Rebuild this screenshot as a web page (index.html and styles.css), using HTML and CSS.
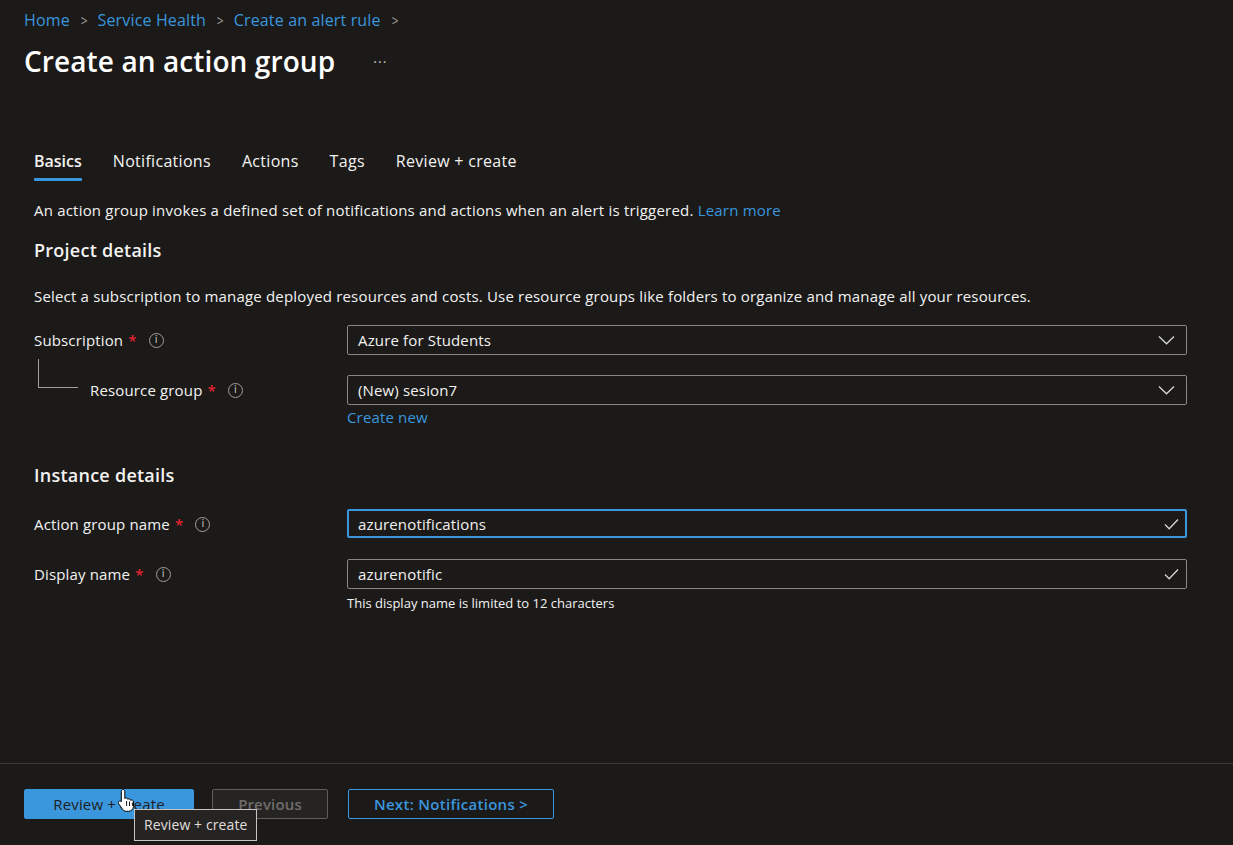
FILE: index.html
```html
<!DOCTYPE html>
<html lang="en">
<head>
<meta charset="utf-8">
<title>Create an action group</title>
<link rel="stylesheet" href="styles.css">
</head>
<body>
<div class="page">
  <header class="header">
    <nav class="crumbs">
      <a class="crumb">Home</a><span class="sep">&gt;</span>
      <a class="crumb">Service Health</a><span class="sep">&gt;</span>
      <a class="crumb">Create an alert rule</a><span class="sep">&gt;</span>
    </nav>
    <div class="title-row">
      <h1 class="title">Create an action group</h1>
      <span class="more">···</span>
    </div>
  </header>

  <main class="content">
    <div class="tabs">
      <span class="tab active">Basics</span>
      <span class="tab">Notifications</span>
      <span class="tab">Actions</span>
      <span class="tab">Tags</span>
      <span class="tab">Review + create</span>
    </div>

    <p class="intro">An action group invokes a defined set of notifications and actions when an alert is triggered. <a class="link">Learn more</a></p>

    <h2 class="section">Project details</h2>
    <p class="section-desc">Select a subscription to manage deployed resources and costs. Use resource groups like folders to organize and manage all your resources.</p>

    <div class="row row-sub">
      <div class="label">Subscription <span class="req">*</span><span class="info">i</span></div>
      <div class="field select">
        <span>Azure for Students</span>
        <svg class="chev" width="17" height="10" viewBox="0 0 17 10"><path d="M1 1.5 L8.5 8.8 L16 1.5" fill="none" stroke="#d6d6d6" stroke-width="1.3"/></svg>
      </div>
    </div>

    <div class="row row-rg">
      <div class="label indent"><span class="tree"></span>Resource group <span class="req">*</span><span class="info">i</span></div>
      <div class="field-wrap">
        <div class="field select">
          <span>(New) sesion7</span>
          <svg class="chev" width="17" height="10" viewBox="0 0 17 10"><path d="M1 1.5 L8.5 8.8 L16 1.5" fill="none" stroke="#d6d6d6" stroke-width="1.3"/></svg>
        </div>
        <a class="link create-new">Create new</a>
      </div>
    </div>

    <h2 class="section section-inst">Instance details</h2>

    <div class="row row-agn">
      <div class="label">Action group name <span class="req">*</span><span class="info">i</span></div>
      <div class="field input focus">
        <span>azurenotifications</span>
        <svg class="check" width="15" height="12" viewBox="0 0 15 12"><path d="M1 6.5 L5.2 10.7 L14 1.5" fill="none" stroke="#d6d6d6" stroke-width="1.3"/></svg>
      </div>
    </div>

    <div class="row row-dn">
      <div class="label">Display name <span class="req">*</span><span class="info">i</span></div>
      <div class="field-wrap">
        <div class="field input">
          <span>azurenotific</span>
          <svg class="check" width="15" height="12" viewBox="0 0 15 12"><path d="M1 6.5 L5.2 10.7 L14 1.5" fill="none" stroke="#d6d6d6" stroke-width="1.3"/></svg>
        </div>
        <div class="hint">This display name is limited to 12 characters</div>
      </div>
    </div>
  </main>

  <footer class="footer">
    <div class="btn-wrap">
      <button class="btn primary">Review + create</button>
      <svg class="cursor" width="20" height="24" viewBox="0 0 20 24">
        <path d="M6 1.5c1 0 1.8.8 1.8 1.8v7.2c.4-.5 1.2-.7 1.8-.5.7.2 1.1.7 1.2 1.3.4-.4 1.1-.6 1.7-.4.7.2 1.1.8 1.2 1.4.5-.3 1.1-.4 1.600-.2.8.3 1.2 1 1.2 1.8v4.4c0 2.8-2.3 5-5.1 5H9.3c-1.6 0-3-.8-3.9-2.1L1.6 15.6c-.5-.8-.3-1.8.5-2.3.7-.4 1.6-.3 2.1.3l.1.1V3.3C4.3 2.3 5 1.5 6 1.5z" fill="#ffffff" stroke="#000000" stroke-width="1"/>
        <path d="M9.6 13v5M12.5 13.5v4.5M15.4 14.5v3.5" stroke="#000" stroke-width=".9"/>
      </svg>
      <div class="tooltip">Review + create</div>
    </div>
    <button class="btn disabled">Previous</button>
    <button class="btn outline">Next: Notifications &gt;</button>
  </footer>
</div>
</body>
</html>
```

FILE: styles.css
```css
* { box-sizing: border-box; }
html, body {
  margin: 0;
  padding: 0;
  background: #1b1a19;
}
body {
  font-family: "Open Sans", "Segoe UI", sans-serif;
  color: #f3f2f1;
  font-size: 15px;
  letter-spacing: 0.15px;
  width: 1233px;
  height: 845px;
  overflow: hidden;
}
.page {
  height: 845px;
  display: flex;
  flex-direction: column;
}
.header {
  padding: 8px 24px 0 24px;
}
.crumbs {
  display: flex;
  align-items: center;
  font-size: 16px;
  letter-spacing: 0.15px;
  line-height: 24px;
  height: 24px;
}
.crumb {
  color: #3a96dd;
}
.sep {
  color: #a19f9d;
  margin: 0 9px 0 10px;
  font-size: 15px;
  transform: scaleX(0.8);
}
.title-row {
  display: flex;
  align-items: center;
  margin-top: 10px;
  height: 38px;
}
.title {
  margin: 0;
  font-size: 28px;
  font-weight: 600;
  letter-spacing: 0.1px;
  color: #ffffff;
}
.more {
  margin-left: 38px;
  color: #c8c6c4;
  font-size: 14px;
  letter-spacing: 1px;
}
.content {
  flex: 1;
  padding: 0 34px;
}
.tabs {
  display: flex;
  margin-top: 69px;
  height: 36px;
  gap: 31px;
}
.tab {
  font-size: 16px;
  line-height: 24px;
  color: #f3f2f1;
  position: relative;
  height: 36px;
  letter-spacing: 0.3px;
}
.tab.active {
  font-weight: 600;
  letter-spacing: 0;
}
.tab.active::after {
  content: "";
  position: absolute;
  left: 0;
  right: 0;
  top: 29px;
  height: 3px;
  background: #3a96dd;
  border-radius: 1px;
}
.intro {
  margin: 15px 0 0 0;
  line-height: 20px;
  letter-spacing: 0.2px;
}
.link {
  color: #3a96dd;
}
.section {
  margin: 18px 0 0 0;
  font-size: 18px;
  font-weight: 600;
  line-height: 24px;
  letter-spacing: 0.25px;
}
.section-desc {
  margin: 24px 0 0 0;
  line-height: 20px;
  letter-spacing: 0.18px;
}
.row {
  display: flex;
  align-items: flex-start;
}
.row-sub { margin-top: 19px; }
.row-rg { margin-top: 20px; }
.row-agn { margin-top: 22px; }
.row-dn { margin-top: 20px; }
.label {
  width: 313px;
  display: flex;
  align-items: center;
  height: 30px;
  position: relative;
}
.label.indent {
  padding-left: 56px;
}
.tree {
  position: absolute;
  left: 4px;
  top: -16px;
  width: 40px;
  height: 29px;
  border-left: 1px solid #a19f9d;
  border-bottom: 1px solid #a19f9d;
}
.req {
  color: #e5232f;
  margin-left: 5px;
  font-weight: 600;
}
.info {
  display: inline-flex;
  align-items: center;
  justify-content: center;
  width: 15px;
  height: 15px;
  border: 1px solid #a19f9d;
  border-radius: 50%;
  font-size: 10px;
  color: #c8c6c4;
  margin-left: 12px;
  font-family: "DejaVu Sans", sans-serif;
  letter-spacing: 0;
  line-height: 1;
}
.field-wrap {
  width: 840px;
  display: flex;
  flex-direction: column;
}
.field {
  width: 840px;
  height: 30px;
  border: 1px solid #8a8886;
  border-radius: 2px;
  display: flex;
  align-items: center;
  justify-content: space-between;
  padding: 0 11px 0 10px;
}
.field.focus {
  border: 2px solid #3a96dd;
  padding: 0 10px 0 9px;
  height: 29px;
}
.chev { margin-right: 0; }
.check { margin-right: -4px; }
.create-new {
  margin-top: 2px;
  line-height: 20px;
}
.section-inst {
  margin-top: 36px;
}
.hint {
  font-size: 13px;
  margin-top: 6px;
  line-height: 16px;
  letter-spacing: 0;
}
.footer {
  height: 82px;
  border-top: 1px solid #3b3a39;
  display: flex;
  align-items: flex-start;
  padding: 25px 24px 0 24px;
  gap: 18px;
}
.btn {
  font-family: inherit;
  font-size: 15px;
  height: 30px;
  border-radius: 2px;
  padding: 0 10px;
  letter-spacing: 0.15px;
}
.btn-wrap {
  position: relative;
}
.btn.primary {
  width: 170px;
  background: #3a96dd;
  border: 1px solid #3a96dd;
  color: #201f1e;
}
.btn.disabled {
  width: 116px;
  background: #252423;
  border: 1px solid #605e5c;
  color: #6f6d6b;
  font-weight: 600;
}
.btn.outline {
  width: 206px;
  margin-left: 2px;
  background: transparent;
  border: 1px solid #3a96dd;
  color: #3a96dd;
  font-weight: 600;
  letter-spacing: 0.3px;
}
.cursor {
  position: absolute;
  left: 93px;
  top: -1px;
}
.tooltip {
  position: absolute;
  left: 110px;
  top: 20px;
  background: #252423;
  border: 1px solid #c8c6c4;
  color: #e1dfdd;
  padding: 0 9px;
  height: 32px;
  line-height: 30px;
  font-size: 14px;
  white-space: nowrap;
  letter-spacing: 0.1px;
}
```
